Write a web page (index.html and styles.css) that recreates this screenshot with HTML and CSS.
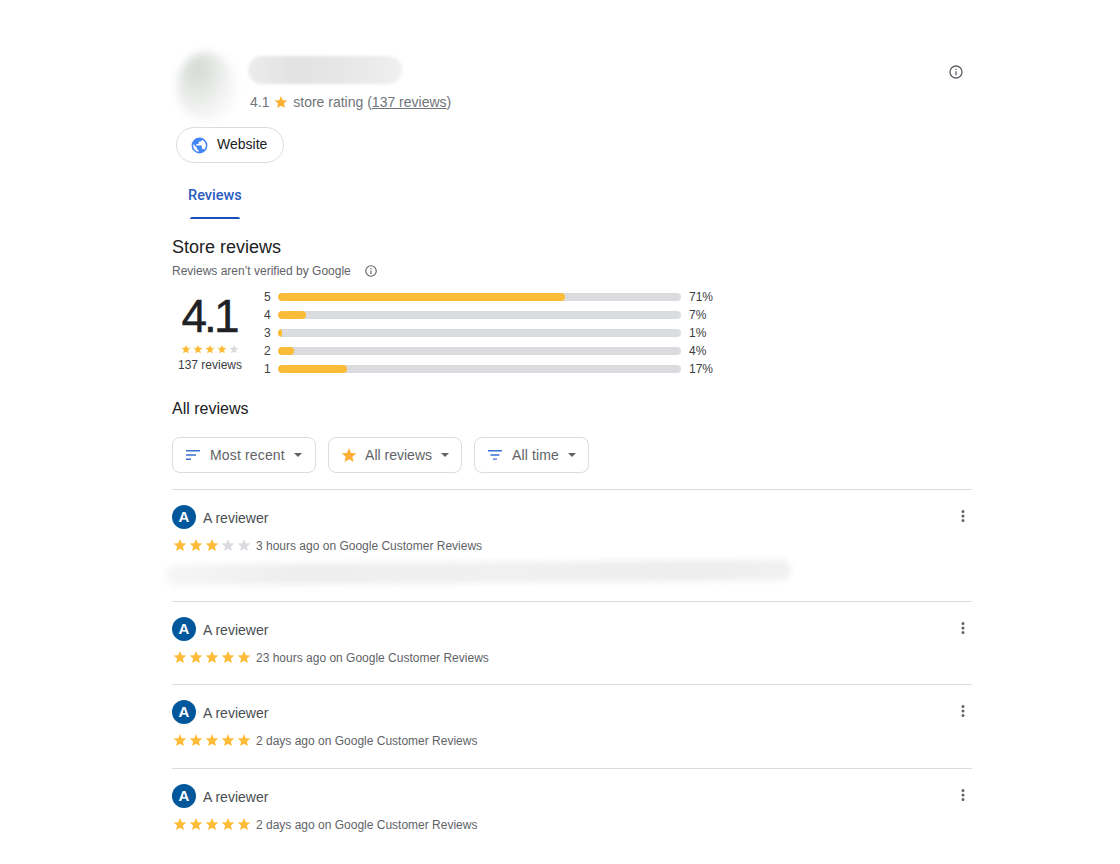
FILE: index.html
```html
<!DOCTYPE html>
<html lang="en">
<head>
<meta charset="utf-8">
<title>Store reviews</title>
<link rel="stylesheet" href="styles.css">
</head>
<body>
<svg class="defs" width="0" height="0" aria-hidden="true">
  <defs>
    <symbol id="star" viewBox="0 0 24 24"><path d="M12 1.6l3.05 7.25 7.85.65-5.95 5.15 1.8 7.7L12 18.3l-6.75 4.05 1.8-7.7L1.1 9.5l7.85-.65z"/></symbol>
    <symbol id="info" viewBox="0 0 24 24"><path d="M11 7h2v2h-2zm0 4h2v6h-2zm1-9a10 10 0 1 0 0 20 10 10 0 0 0 0-20zm0 18a8 8 0 1 1 0-16 8 8 0 0 1 0 16z"/></symbol>
    <symbol id="more" viewBox="0 0 24 24"><path d="M12 8a2 2 0 1 0 0-4 2 2 0 0 0 0 4zm0 2a2 2 0 1 0 0 4 2 2 0 0 0 0-4zm0 6a2 2 0 1 0 0 4 2 2 0 0 0 0-4z"/></symbol>
  </defs>
</svg>
<main class="page">
  <header class="store">
    <div class="store-top">
      <div class="store-logo"></div>
      <div class="store-meta">
        <div class="store-name"></div>
        <div class="store-rating">4.1 <svg class="star-inline"><use href="#star"/></svg> store rating (<span class="link">137 reviews</span>)</div>
      </div>
      <svg class="icon-info-top"><use href="#info"/></svg>
    </div>
    <a class="pill">
      <svg class="globe" viewBox="0 0 24 24"><path d="M12 2a10 10 0 1 0 0 20 10 10 0 0 0 0-20zM4 12c0-.6.07-1.2.2-1.78L9 15v1c0 1.1.9 2 2 2v1.93A8 8 0 0 1 4 12zm13.9 5.4A2 2 0 0 0 16 16h-1v-3a1 1 0 0 0-1-1H8v-2h2a1 1 0 0 0 1-1V7h2a2 2 0 0 0 2-2v-.41a8 8 0 0 1 2.9 12.81z"/></svg>
      <span>Website</span>
    </a>
  </header>

  <nav class="tabs"><span class="tab">Reviews</span></nav>

  <section class="summary">
    <h2 class="h-store">Store reviews</h2>
    <div class="notice"><span>Reviews aren’t verified by Google</span><svg class="icon-info-small"><use href="#info"/></svg></div>
    <div class="score-row">
      <div class="score">
        <div class="score-num">4.1</div>
        <div class="score-stars">
          <svg class="on"><use href="#star"/></svg><svg class="on"><use href="#star"/></svg><svg class="on"><use href="#star"/></svg><svg class="on"><use href="#star"/></svg><svg class="off"><use href="#star"/></svg>
        </div>
        <div class="score-count">137 reviews</div>
      </div>
      <div class="bars">
        <div class="bar-row"><span class="bar-label">5</span><div class="track"><div class="fill" style="width:71.2%"></div></div><span class="bar-pct">71%</span></div>
        <div class="bar-row"><span class="bar-label">4</span><div class="track"><div class="fill" style="width:7%"></div></div><span class="bar-pct">7%</span></div>
        <div class="bar-row"><span class="bar-label">3</span><div class="track"><div class="fill" style="width:1%"></div></div><span class="bar-pct">1%</span></div>
        <div class="bar-row"><span class="bar-label">2</span><div class="track"><div class="fill" style="width:4%"></div></div><span class="bar-pct">4%</span></div>
        <div class="bar-row"><span class="bar-label">1</span><div class="track"><div class="fill" style="width:17%"></div></div><span class="bar-pct">17%</span></div>
      </div>
    </div>
  </section>

  <h3 class="h-all">All reviews</h3>
  <div class="filters">
    <button class="filter f-recent">
      <svg class="f-icon" viewBox="0 0 16 16"><path d="M1 3h14v1.5H1zM1 7.2h10v1.5H1zM1 11.4h5v1.5H1z"/></svg>
      <span>Most recent</span><i class="caret"></i>
    </button>
    <button class="filter f-rating">
      <svg class="f-star"><use href="#star"/></svg>
      <span>All reviews</span><i class="caret"></i>
    </button>
    <button class="filter f-time">
      <svg class="f-icon" viewBox="0 0 16 16"><path d="M1 3h14v1.5H1zM3.5 7.2h9v1.5h-9zM6 11.4h4v1.5H6z"/></svg>
      <span>All time</span><i class="caret"></i>
    </button>
  </div>

  <article class="review r-first">
    <div class="r-head"><div class="r-avatar">A</div><span class="r-name">A reviewer</span><svg class="r-more"><use href="#more"/></svg></div>
    <div class="r-line">
      <svg class="on"><use href="#star"/></svg><svg class="on"><use href="#star"/></svg><svg class="on"><use href="#star"/></svg><svg class="off"><use href="#star"/></svg><svg class="off"><use href="#star"/></svg>
      <span class="r-when">3 hours ago on Google Customer Reviews</span>
    </div>
    <div class="r-text"></div>
  </article>
  <article class="review r-2">
    <div class="r-head"><div class="r-avatar">A</div><span class="r-name">A reviewer</span><svg class="r-more"><use href="#more"/></svg></div>
    <div class="r-line">
      <svg class="on"><use href="#star"/></svg><svg class="on"><use href="#star"/></svg><svg class="on"><use href="#star"/></svg><svg class="on"><use href="#star"/></svg><svg class="on"><use href="#star"/></svg>
      <span class="r-when">23 hours ago on Google Customer Reviews</span>
    </div>
  </article>
  <article class="review r-3">
    <div class="r-head"><div class="r-avatar">A</div><span class="r-name">A reviewer</span><svg class="r-more"><use href="#more"/></svg></div>
    <div class="r-line">
      <svg class="on"><use href="#star"/></svg><svg class="on"><use href="#star"/></svg><svg class="on"><use href="#star"/></svg><svg class="on"><use href="#star"/></svg><svg class="on"><use href="#star"/></svg>
      <span class="r-when">2 days ago on Google Customer Reviews</span>
    </div>
  </article>
  <article class="review r-4">
    <div class="r-head"><div class="r-avatar">A</div><span class="r-name">A reviewer</span><svg class="r-more"><use href="#more"/></svg></div>
    <div class="r-line">
      <svg class="on"><use href="#star"/></svg><svg class="on"><use href="#star"/></svg><svg class="on"><use href="#star"/></svg><svg class="on"><use href="#star"/></svg><svg class="on"><use href="#star"/></svg>
      <span class="r-when">2 days ago on Google Customer Reviews</span>
    </div>
  </article>
</main>
</body>
</html>
```
FILE: styles.css
```css
* { box-sizing: border-box; }
html, body { margin: 0; padding: 0; background: #fff; overflow: hidden; }
body { height: 864px; font-family: "Liberation Sans", Arial, sans-serif; color: #202124; }
.defs { position: absolute; }

.page { width: 800px; margin-left: 172px; padding-top: 52px; }

.store-top { display: flex; align-items: flex-start; height: 72px; padding-left: 6px; padding-right: 8px; }
.store-logo { width: 58px; height: 68px; margin-left: -1px; border-radius: 50% 50% 45% 45%; background: radial-gradient(ellipse at 35% 25%, #d3d9d4 0%, #e6e9e6 35%, #f5f5f5 65%, #fcfcfc 100%); filter: blur(4px); }
.store-meta { flex: 1; margin-left: 13px; }
.store-name { width: 154px; height: 28px; margin-top: 4px; border-radius: 14px; background: linear-gradient(90deg, #ececec 0%, #e2e2e2 30%, #e6e6e6 60%, #f0f0f0 100%); filter: blur(1.5px); }
.store-rating { margin-top: 9px; margin-left: 2px; font-size: 14px; line-height: 18px; color: #70757a; white-space: nowrap; }
.star-inline { width: 14px; height: 14px; fill: #fbb033; vertical-align: -2px; margin: 0 1px; }
.link { text-decoration: underline; }
.icon-info-top { width: 16px; height: 16px; margin-top: 12px; fill: #5f6368; }

.pill { display: inline-flex; align-items: center; gap: 8px; width: 108px; height: 36px; margin: 3px 0 0 4px; padding-left: 13px; padding-bottom: 2px; border: 1px solid #dadce0; border-radius: 18px; font-size: 14px; color: #202124; }
.globe { width: 19px; height: 19px; margin-top: 2px; fill: #4285f4; }

.tabs { display: flex; height: 56px; padding-left: 16px; }
.tab { position: relative; width: 54px; height: 56px; padding-top: 24px; font-family: Roboto, sans-serif; font-size: 14.5px; line-height: 18px; font-weight: 500; color: #2a5bc0; white-space: nowrap; }
.tab::after { content: ""; position: absolute; left: 2px; width: 50px; bottom: 0; height: 2px; border-radius: 2px 2px 0 0; background: #1a4fb8; }

.h-store { margin: 18px 0 0; font-size: 18px; line-height: 20px; font-weight: 400; color: #202124; }
.notice { display: flex; align-items: center; gap: 13px; margin-top: 7px; height: 14px; font-size: 12px; line-height: 14px; color: #5f6368; }
.icon-info-small { width: 14px; height: 14px; fill: #5f6368; }

.score-row { display: flex; margin-top: 10px; }
.score { width: 76px; text-align: center; }
.score-num { height: 50px; font-size: 46px; line-height: 56px; letter-spacing: -3px; padding-right: 2px; -webkit-text-stroke: 0.4px #202124; color: #202124; }
.score-stars { display: flex; justify-content: center; margin-top: 5px; height: 14px; }
.score-stars svg { width: 10px; height: 10px; margin: 1px; }
.score-count { font-size: 12px; line-height: 16px; color: #3c4043; }
.on { fill: #fdbc37; }
.off { fill: #dadce0; }

.bars { margin-left: 16px; width: 470px; }
.bar-row { display: flex; align-items: center; height: 18px; font-size: 12px; color: #3c4043; }
.bar-label { width: 14px; }
.track { width: 403px; height: 8px; border-radius: 4px; background: #dadce0; overflow: hidden; }
.fill { height: 8px; border-radius: 4px; background: #fdbc37; }
.bar-pct { margin-left: 8px; }

.h-all { margin: 21px 0 0; font-size: 16px; line-height: 20px; font-weight: 400; color: #202124; }

.filters { display: flex; gap: 12px; margin-top: 18px; }
.filter { display: flex; align-items: center; height: 36px; padding: 0 12px; border: 1px solid #dadce0; border-radius: 8px; background: #fff; font: 400 14px "Liberation Sans", Arial, sans-serif; color: #5f6368; white-space: nowrap; }
.f-recent, .f-time { letter-spacing: 0.15px; }
.f-recent { width: 144px; }
.f-rating { width: 134px; }
.f-time { width: 115px; }
.f-icon { width: 16px; height: 16px; margin-right: 9px; fill: #3b6fd4; }
.f-star { width: 18px; height: 18px; margin-right: 8px; fill: #fbb033; }
.caret { width: 0; height: 0; margin-left: 9px; border-left: 4px solid transparent; border-right: 4px solid transparent; border-top: 4px solid #5f6368; }

.review { border-top: 1px solid #dadce0; }
.r-first { height: 112px; margin-top: 16px; }
.r-2 { height: 83px; }
.r-3 { height: 84px; }
.r-4 { height: 84px; }
.r-head { display: flex; align-items: center; height: 24px; margin-top: 15px; }
.r-avatar { width: 24px; height: 24px; border-radius: 50%; background: #01579b; color: #fff; font-size: 15px; font-weight: 700; line-height: 24px; text-align: center; }
.r-name { flex: 1; margin-left: 7px; padding-top: 2px; font-size: 14px; color: #4a4e52; }
.r-more { width: 18px; height: 18px; margin-top: -3px; fill: #5f6368; }
.r-line { display: flex; align-items: center; height: 18px; margin-top: 7px; }
.r-line svg { width: 14px; height: 14px; margin: 0 1px; }
.r-when { margin-left: 4px; padding-top: 2px; font-size: 12px; color: #5f6368; }
.r-text { width: 625px; height: 21px; margin-top: 8px; margin-left: -6px; border-radius: 10px; background: linear-gradient(90deg, #f6f6f6 0%, #eeeeee 20%, #f0f0f0 55%, #ededed 85%, #f1f1f1 100%); transform: rotate(-0.5deg); filter: blur(3px); }
```
